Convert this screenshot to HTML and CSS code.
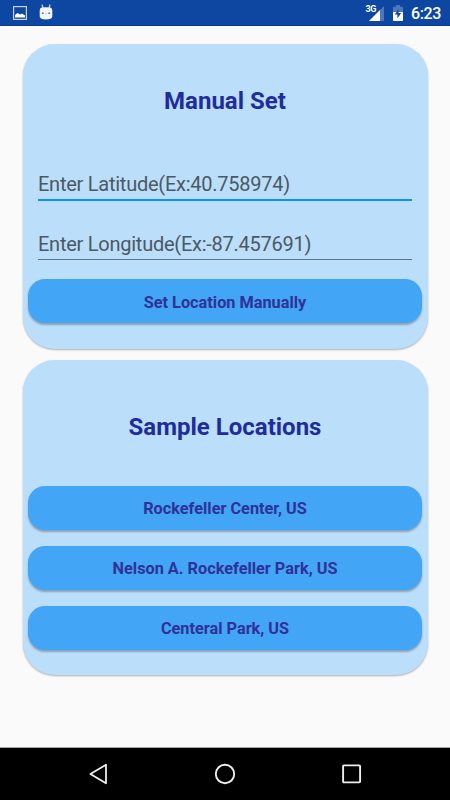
FILE: index.html
```html
<!DOCTYPE html>
<html lang="en">
<head>
  <meta charset="UTF-8">
  <meta name="viewport" content="width=device-width, initial-scale=1.0">
  <title>Set Location</title>
  <link rel="stylesheet" href="styles.css">
</head>
<body>
  <div class="status-bar">
    <svg class="picture-icon" width="14" height="14" viewBox="0 0 14 14">
      <rect x="0.6" y="0.6" width="12.8" height="12.8" fill="none" stroke="#c5d3ea" stroke-width="1.2"/>
      <path d="M2 11.6V9L4.5 7L7 8.5L9 7.6L12 9.5V11.6Z" fill="#fff"/>
    </svg>
    <svg class="robot-icon" width="14" height="16" viewBox="0 0 14 16">
      <path d="M3 0.5L4 4M11 0.5L10 4" stroke="#b5c6e2" stroke-width="1.4"/>
      <path d="M2.5 3.6Q7 3 11.5 3.6Q13.6 4.6 13.3 7V12.5Q13 15.5 7 15.5Q1 15.5 0.7 12.5V7Q0.4 4.6 2.5 3.6Z" fill="#f2f6fb"/>
      <circle cx="3.8" cy="9.2" r="0.9" fill="#496fb3"/>
      <circle cx="10.2" cy="9.2" r="0.9" fill="#496fb3"/>
      <path d="M6 9.6H8" stroke="#b5c6e2" stroke-width="0.8"/>
    </svg>
    <div class="status-right">
      <span class="network">3G</span>
      <svg class="signal-icon" width="15" height="15" viewBox="0 0 15 15">
        <path d="M0 15L15 0V15Z" fill="#5077bb"/>
        <path d="M0 15L11 4V15Z" fill="#fff"/>
      </svg>
      <svg class="battery-icon" width="10" height="16" viewBox="0 0 10 16">
        <path d="M0 2.5Q0 1.7 0.8 1.7H3V0H7V1.7H9.2Q10 1.7 10 2.5V7H0Z" fill="#5077bb"/>
        <path d="M0 7H10V15.2Q10 16 9.2 16H0.8Q0 16 0 15.2Z" fill="#fff"/>
        <path d="M5.6 4L1.8 9.5H4.4V13.5L8.2 8H5.6Z" fill="#0d47a1"/>
      </svg>
      <span class="clock">6:23</span>
    </div>
  </div>

  <div class="content">
    <div class="card manual">
      <h1>Manual Set</h1>
      <div class="field active">Enter Latitude(Ex:40.758974)</div>
      <div class="field">Enter Longitude(Ex:-87.457691)</div>
      <button class="btn">Set Location Manually</button>
    </div>
    <div class="card samples">
      <h1>Sample Locations</h1>
      <button class="btn">Rockefeller Center, US</button>
      <button class="btn">Nelson A. Rockefeller Park, US</button>
      <button class="btn">Centeral Park, US</button>
    </div>
  </div>

  <div class="nav-bar">
    <svg width="20" height="22" viewBox="0 0 20 22">
      <path d="M18 1.7V20.3L2.4 11Z" fill="none" stroke="#eee" stroke-width="1.8" stroke-linejoin="round"/>
    </svg>
    <svg width="22" height="22" viewBox="0 0 22 22">
      <circle cx="11" cy="11" r="9.2" fill="none" stroke="#eee" stroke-width="1.9"/>
    </svg>
    <svg width="20" height="22" viewBox="0 0 20 22">
      <rect x="1.1" y="2.4" width="17" height="17" rx="0.8" fill="none" stroke="#eee" stroke-width="1.9"/>
    </svg>
  </div>
</body>
</html>
```

FILE: styles.css
```css
* {
  box-sizing: border-box;
}

body {
  margin: 0;
  height: 800px;
  display: flex;
  flex-direction: column;
  background-color: #fafafa;
  font-family: Roboto, sans-serif;
  overflow: hidden;
}

.status-bar {
  height: 26px;
  flex: none;
  display: flex;
  align-items: flex-start;
  padding: 0 9px 0 13px;
  background-color: #0d47a1;
  border-bottom: 1px solid #083a94;
  color: #fff;
}

.picture-icon {
  margin-top: 6px;
}

.robot-icon {
  margin: 4px 0 0 12px;
}

.status-right {
  display: flex;
  margin-left: auto;
}

.network {
  margin: 4px -7px 0 0;
  font-size: 9px;
  line-height: 10px;
  font-weight: 700;
  letter-spacing: -0.4px;
}

.signal-icon {
  margin-top: 6px;
}

.battery-icon {
  margin: 5px 8px 0 9px;
}

.clock {
  font-size: 16px;
  line-height: 28px;
  font-weight: 500;
  letter-spacing: -0.4px;
}

.content {
  flex: 1;
  padding: 18px 22.5px 0;
}

.card {
  display: flex;
  flex-direction: column;
  padding: 0 5.5px;
  border-radius: 32px;
  background-color: #bbdefb;
  box-shadow: 0 1px 2px rgba(0, 0, 0, 0.3);
}

.manual {
  height: 304.5px;
  margin-bottom: 11px;
}

.samples {
  height: 315.5px;
}

h1 {
  margin: 0;
  padding-top: 43px;
  height: 112px;
  font-size: 24px;
  line-height: 28px;
  font-weight: 700;
  text-align: center;
  color: #1f2d9b;
}

.samples h1 {
  padding-top: 53px;
  height: 126px;
}

.field {
  height: 60px;
  margin: 0 10px;
  padding-top: 16px;
  font-size: 20px;
  line-height: 24px;
  letter-spacing: -0.25px;
  color: #4b5963;
  white-space: nowrap;
}

.field::after {
  content: "";
  display: block;
  height: 1px;
  margin-top: 3px;
  background-color: #5f7280;
}

.field.active::after {
  height: 2px;
  background-color: #0b91f8;
}

.btn {
  flex: none;
  height: 44px;
  margin: 3px 0 13px;
  padding: 2px 0 0;
  border: 0;
  border-radius: 17px;
  background-color: #42a5f5;
  box-shadow: 0 2px 2px rgba(0, 0, 0, 0.27);
  font-family: inherit;
  font-size: 16.3px;
  font-weight: 700;
  color: #303199;
}

.samples .btn {
  margin: 0 0 16px;
}

.nav-bar {
  height: 53px;
  flex: none;
  display: flex;
  align-items: center;
  justify-content: space-between;
  padding: 0 88px;
  border-top: 1px solid #a6a6a6;
  background-color: #000;
}
```
